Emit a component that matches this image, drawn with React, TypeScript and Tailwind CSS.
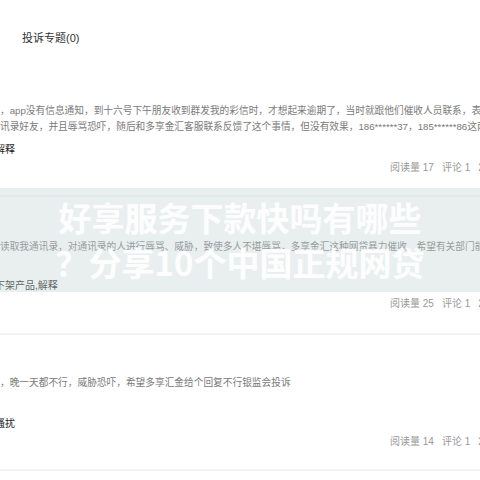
import React from "react";

type Post = {
  body: string;
  tags: string;
  reads: number;
  comments: number;
  date: string;
  pad: string;
  gapBody: string;
  pb: string;
};

const posts: Post[] = [
  {
    body:
      "，app没有信息通知，到十六号下午朋友收到群发我的彩信时，才想起来逾期了，当时就跟他们催收人员联系，表示会尽快还款\n讯录好友，并且辱骂恐吓，随后和多享金汇客服联系反馈了这个事情，但没有效果，186******37，185******86这两个号码",
    tags: "解释",
    reads: 17,
    comments: 1,
    date: "2018-03-12",
    pad: "pt-[37px]",
    gapBody: "mt-[7px]",
    pb: "pb-[19px]",
  },
  {
    body: "读取我通讯录，对通讯录的人进行辱骂、威胁，致使多人不堪辱骂，多享金汇这种网贷暴力催收，希望有关部门能对其进行处理",
    tags: "下架产品,解释",
    reads: 25,
    comments: 1,
    date: "2018-03-10",
    pad: "pt-[42px]",
    gapBody: "mt-[23px]",
    pb: "pb-[21px]",
  },
  {
    body: "，晚一天都不行，威胁恐吓，希望多享汇金给个回复不行银监会投诉",
    tags: "骚扰",
    reads: 14,
    comments: 1,
    date: "2018-03-08",
    pad: "pt-[40px]",
    gapBody: "mt-[25px]",
    pb: "pb-[19px]",
  },
];

export default function App() {
  return (
    <div
      className="relative w-[480px] h-[480px] overflow-hidden bg-white"
      style={{ fontFamily: '"Liberation Sans", "Noto Sans CJK SC", sans-serif' }}
    >
      <div className="h-[66px] pl-[22px] pt-[31px] text-[11px] leading-[14px] text-[#333]">
        投诉专题(0)
      </div>

      {posts.map((p, i) => (
        <div key={i} className={`${p.pad} ${p.pb} border-b-2 border-[#f2f2f2]`}>
          {p.body.split("\n").map((line, j) => (
            <p key={j} className="whitespace-nowrap text-[9.7px] leading-[16px] text-[#7a7a7a]">
              {line}
            </p>
          ))}
          <p className={`${p.gapBody} -ml-[5px] whitespace-nowrap text-[10px] leading-[16px] text-[#222]`}>
            {p.tags}
          </p>
          <div className="mt-[2px] flex gap-[8px] pl-[390px] whitespace-nowrap text-[10px] leading-[16px] text-[#999]">
            <span>阅读量 {p.reads}</span>
            <span>评论 {p.comments}</span>
            <span>{p.date}</span>
          </div>
        </div>
      ))}

      {/* watermark band */}
      <div className="absolute left-0 right-0 top-[188px] h-[104px] bg-[rgba(196,214,214,0.38)] pt-[7px] text-center">
        <p className="text-[33px] leading-[45px] font-bold text-white/90" style={{ fontFamily: '"Noto Sans CJK SC", sans-serif' }}>
          好享服务下款快吗有哪些
        </p>
        <p className="text-[33px] leading-[45px] font-bold text-white/90" style={{ fontFamily: '"Noto Sans CJK SC", sans-serif' }}>
          ？分享10个中国正规网贷
        </p>
      </div>
    </div>
  );
}
